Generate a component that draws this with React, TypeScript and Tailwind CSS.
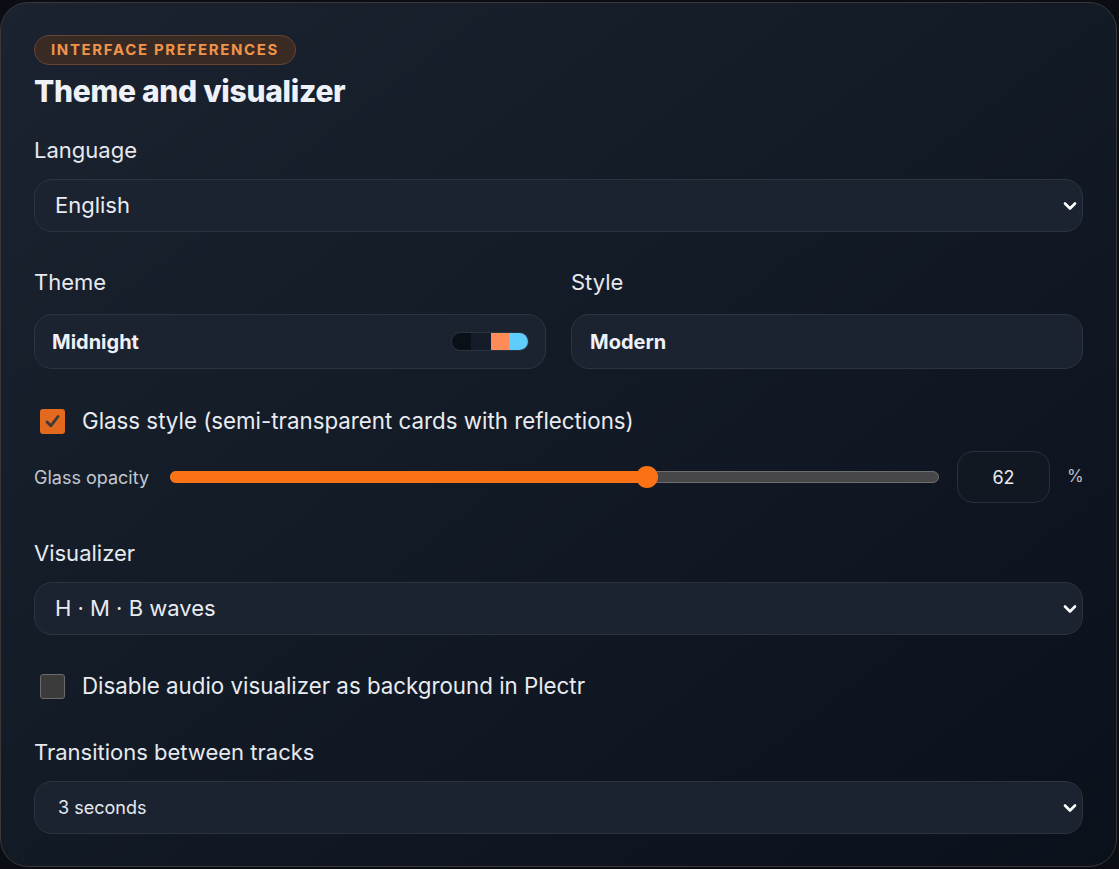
import React from "react";

const Chevron = () => (
  <svg width="14" height="10" viewBox="0 0 14 10" className="shrink-0">
    <path d="M2 2.5 L7 7.5 L12 2.5" fill="none" stroke="#ffffff" strokeWidth="2.6" strokeLinecap="round" strokeLinejoin="round" />
  </svg>
);

function SelectBox({ value, small }: { value: string; small?: boolean }) {
  return (
    <div className="flex h-[53px] items-center justify-between rounded-[18px] border border-[#2c3440] bg-[#1c2330] pl-[20px] pr-[5px]">
      <span className={small ? "pl-[3px] text-[18px] text-[#e6eaf0]" : "text-[22px] text-[#e8ecf2]"}>{value}</span>
      <Chevron />
    </div>
  );
}

function Label({ children }: { children: React.ReactNode }) {
  return <div className="h-[28px] text-[22px] leading-[28px] text-[#e6e9ee]">{children}</div>;
}

export default function App() {
  const opacity = 62;
  return (
    <div className="min-h-[869px] w-[1119px] bg-[#0a0d13] pt-[2px]" style={{ fontFamily: "Inter, 'Noto Sans', sans-serif" }}>
      <div className="flex h-[865px] w-[1117px] flex-col rounded-[28px] border border-[#3b3736] bg-gradient-to-br from-[#1b2330] via-[#121a26] to-[#0b111b] px-[33px] pt-[32px]">
        <div className="flex">
          <span className="flex h-[30px] items-center rounded-full border border-[#6a4330] bg-[#3a2a24] px-[16px] text-[15px] font-bold tracking-[0.11em] text-[#f0944c]">
            INTERFACE PREFERENCES
          </span>
        </div>
        <h1 className="mt-[8px] h-[36px] text-[30px] font-extrabold leading-[36px] tracking-[-0.01em] text-[#eef2f8]">
          Theme and visualizer
        </h1>

        <div className="mt-[27px]">
          <Label>Language</Label>
        </div>
        <div className="mt-[15px]">
          <SelectBox value="English" />
        </div>

        <div className="mt-[36px] grid grid-cols-2 gap-[25px]">
          <div>
            <Label>Theme</Label>
            <div className="mt-[18px] flex h-[55px] items-center justify-between rounded-[18px] border border-[#2c3440] bg-[#1c2330] pl-[17px] pr-[16px]">
              <span className="text-[20px] font-bold text-[#eef1f6]">Midnight</span>
              <div className="flex h-[19px] w-[78px] overflow-hidden rounded-full border border-[#2a3441]">
                <span className="w-[19px] bg-[#0a1018]" />
                <span className="w-[21px] bg-[#131c28]" />
                <span className="w-[18px] bg-[#ff8b59]" />
                <span className="w-[20px] bg-[#5fcdfb]" />
              </div>
            </div>
          </div>
          <div>
            <Label>Style</Label>
            <div className="mt-[18px] flex h-[55px] items-center rounded-[18px] border border-[#2c3440] bg-[#1c2330] pl-[18px]">
              <span className="text-[20px] font-bold text-[#eef1f6]">Modern</span>
            </div>
          </div>
        </div>

        <div className="mt-[38px] flex h-[28px] items-center">
          <span className="ml-[6px] flex h-[25px] w-[25px] items-center justify-center rounded-[3px] bg-[#e2691d]">
            <svg width="19" height="19" viewBox="0 0 19 19">
              <path d="M4 10 L7.8 13.8 L15 4.5" fill="none" stroke="#3a3a3a" strokeWidth="2.8" strokeLinecap="round" strokeLinejoin="round" />
            </svg>
          </span>
          <span className="ml-[17px] text-[22.3px] text-[#e8ebf0]">Glass style (semi-transparent cards with reflections)</span>
        </div>

        <div className="mt-[16px] flex h-[52px] items-center">
          <span className="w-[136px] text-[18px] text-[#c3c8d0]">Glass opacity</span>
          <div className="relative flex h-[22px] flex-1 items-center">
            <div className="h-[12px] w-full rounded-full border border-[#6e6e70] bg-[#47474a]" />
            <div className="absolute left-0 top-[5px] h-[12px] rounded-full bg-[#f97316]" style={{ width: `${opacity}%` }} />
            <div
              className="absolute top-0 h-[22px] w-[22px] -translate-x-1/2 rounded-full bg-[#f97316]"
              style={{ left: `${opacity}%` }}
            />
          </div>
          <div className="ml-[18px] flex h-[52px] w-[93px] items-center justify-center rounded-[16px] border border-[#29313c] bg-[#111822] text-[18px] text-[#e8ebf0]">
            {opacity}
          </div>
          <span className="ml-[17px] w-[16px] text-[17px] text-[#b9bec6]">%</span>
        </div>

        <div className="mt-[36px]">
          <Label>Visualizer</Label>
        </div>
        <div className="mt-[15px]">
          <SelectBox value="H · M · B waves" />
        </div>

        <div className="mt-[37px] flex h-[28px] items-center">
          <span className="ml-[6px] h-[25px] w-[25px] rounded-[3px] border border-[#6b6b6b] bg-[#3b3b3b]" />
          <span className="ml-[17px] text-[22.3px] text-[#e8ebf0]">Disable audio visualizer as background in Plectr</span>
        </div>

        <div className="mt-[38px]">
          <Label>Transitions between tracks</Label>
        </div>
        <div className="mt-[15px]">
          <SelectBox value="3 seconds" small />
        </div>
      </div>
    </div>
  );
}
